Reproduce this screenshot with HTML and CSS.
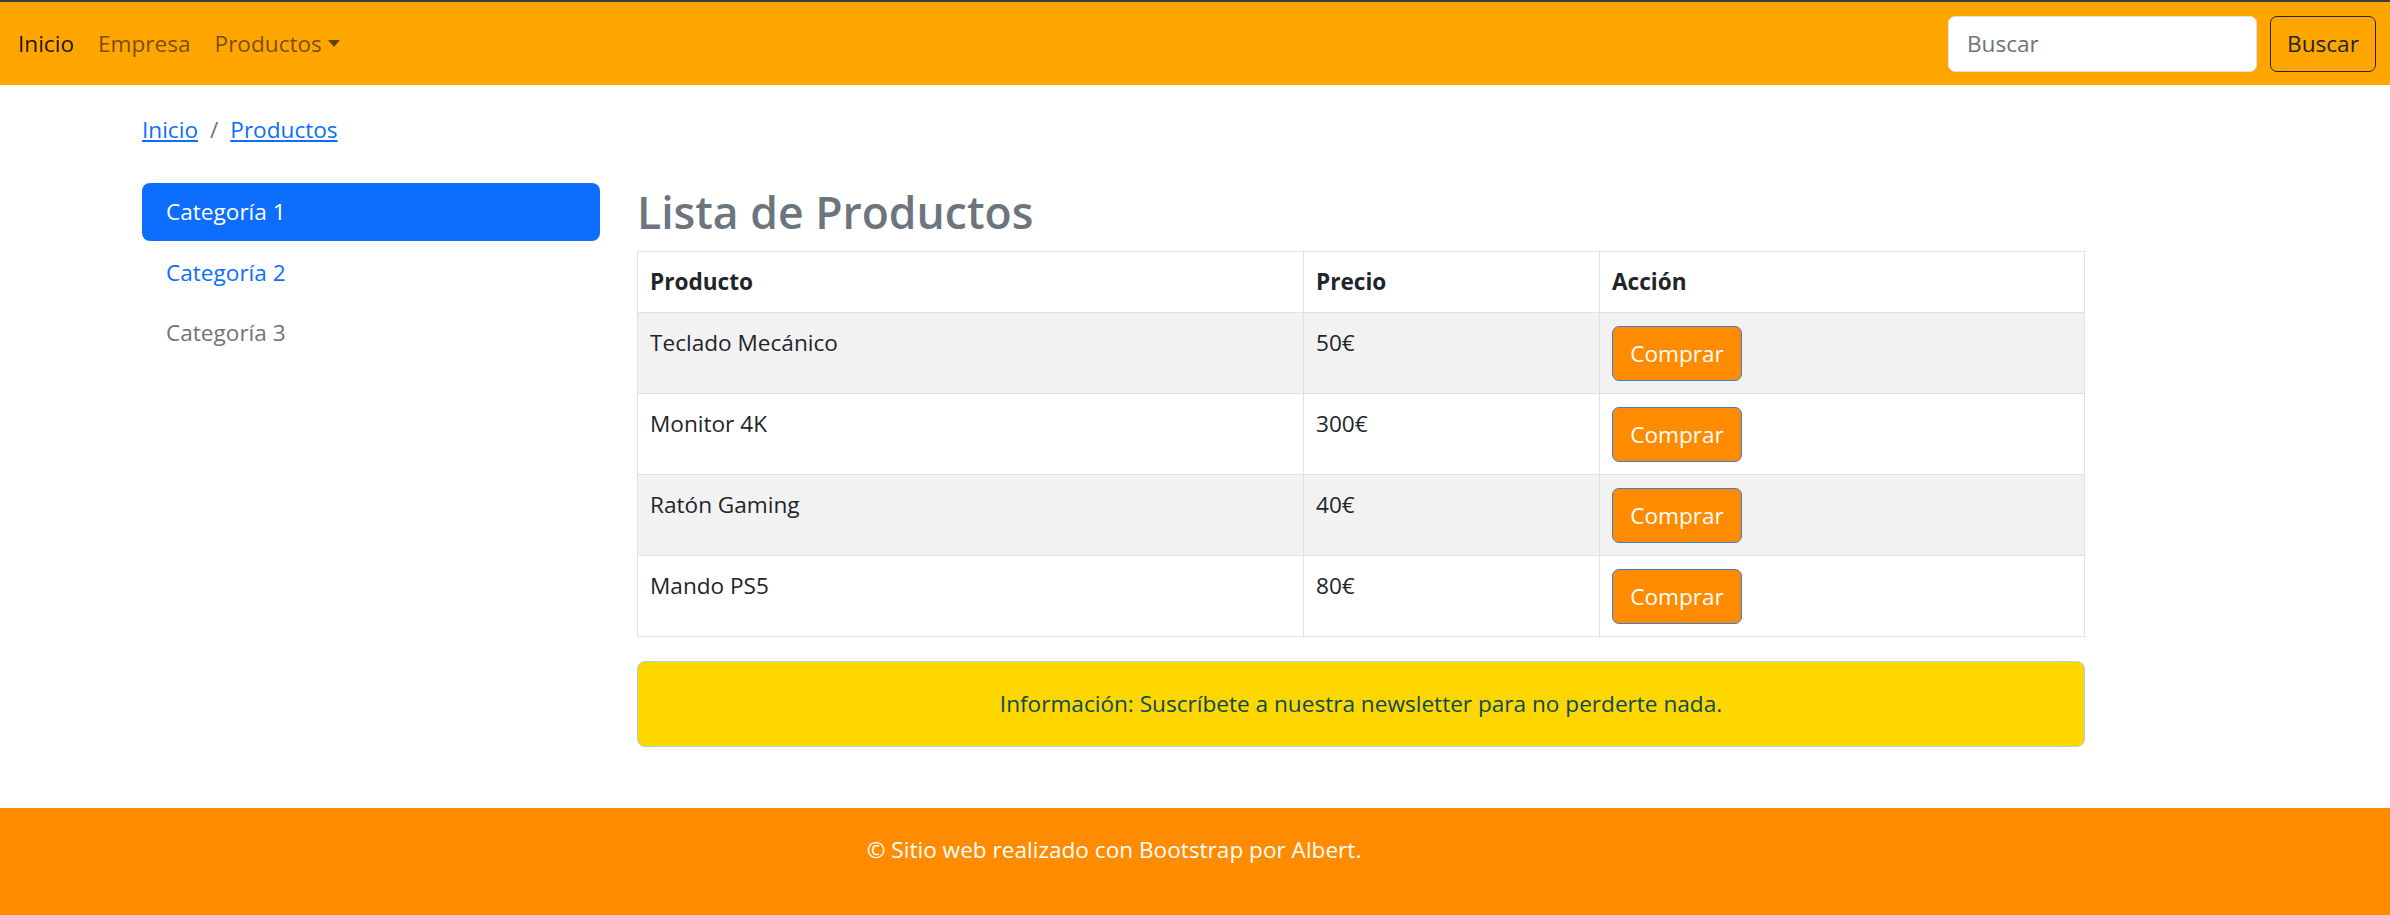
FILE: index.html
```html
<!DOCTYPE html>
<html lang="es">
<head>
<meta charset="utf-8">
<title>Lista de Productos</title>
<link rel="stylesheet" href="styles.css">
</head>
<body>
<nav class="navbar">
  <ul class="nav-links">
    <li><a class="nav-link active" href="#">Inicio</a></li>
    <li><a class="nav-link" href="#">Empresa</a></li>
    <li><a class="nav-link dropdown" href="#">Productos<span class="caret"></span></a></li>
  </ul>
  <form class="search">
    <input class="search-input" type="text" placeholder="Buscar">
    <button class="search-btn" type="button">Buscar</button>
  </form>
</nav>

<main class="container">
  <ol class="breadcrumb">
    <li><a href="#">Inicio</a></li>
    <li class="sep">/</li>
    <li><a href="#">Productos</a></li>
  </ol>
  <div class="row">
    <aside class="sidebar">
      <a class="pill active" href="#">Categoría 1</a>
      <a class="pill" href="#">Categoría 2</a>
      <a class="pill muted" href="#">Categoría 3</a>
    </aside>
    <section class="content">
      <h2 class="title">Lista de Productos</h2>
      <table class="products">
        <thead>
          <tr><th class="c-prod">Producto</th><th class="c-price">Precio</th><th class="c-act">Acción</th></tr>
        </thead>
        <tbody>
          <tr class="odd"><td>Teclado Mecánico</td><td>50€</td><td><button class="buy" type="button">Comprar</button></td></tr>
          <tr><td>Monitor 4K</td><td>300€</td><td><button class="buy" type="button">Comprar</button></td></tr>
          <tr class="odd"><td>Ratón Gaming</td><td>40€</td><td><button class="buy" type="button">Comprar</button></td></tr>
          <tr><td>Mando PS5</td><td>80€</td><td><button class="buy" type="button">Comprar</button></td></tr>
        </tbody>
      </table>
      <div class="alert">Información: Suscríbete a nuestra newsletter para no perderte nada.</div>
    </section>
  </div>
</main>

<footer class="footer">
  <div class="footer-inner">© Sitio web realizado con Bootstrap por Albert.</div>
</footer>
</body>
</html>
```

FILE: styles.css
```css
* { box-sizing: border-box; }
html, body { margin: 0; padding: 0; }
body {
  font-family: "Open Sans", "Noto Sans", sans-serif;
  font-size: 22.6px;
  line-height: 36px;
  color: #212529;
  background: #fff;
}

.navbar {
  display: flex;
  justify-content: space-between;
  align-items: center;
  height: 85px;
  border-top: 2px solid #3d3d3d;
  background: #ffa500;
  padding: 0 14px 0 6px;
}
.nav-links {
  display: flex;
  list-style: none;
  margin: 0;
  padding: 0;
}
.nav-link {
  display: flex;
  align-items: center;
  padding: 0 12px;
  color: rgba(0, 0, 0, 0.55);
  text-decoration: none;
}
.nav-link.active { color: rgba(0, 0, 0, 0.9); }
.caret {
  display: inline-block;
  margin-left: 6px;
  width: 0;
  height: 0;
  border-top: 7px solid rgba(0, 0, 0, 0.6);
  border-left: 6px solid transparent;
  border-right: 6px solid transparent;
}
.search {
  display: flex;
  gap: 13px;
  margin: 0;
}
.search-input {
  width: 309px;
  height: 56px;
  padding: 0 18px;
  border: 1px solid #dee2e6;
  border-radius: 7px;
  font: inherit;
  color: #212529;
  background: #fff;
}
.search-input::placeholder { color: #6c757d; }
.search-btn {
  width: 106px;
  height: 56px;
  border: 1px solid #212529;
  border-radius: 7px;
  background: transparent;
  font: inherit;
  color: #212529;
  padding: 0;
}

.container {
  width: 1944px;
  margin-left: 142px;
}
.breadcrumb {
  display: flex;
  list-style: none;
  margin: 27px 0 0;
  padding: 0;
}
.breadcrumb a { color: #0d6efd; text-decoration: underline; }
.breadcrumb .sep { padding: 0 12px; color: #6c757d; }

.row {
  display: flex;
  gap: 37px;
  margin-top: 35px;
}
.sidebar {
  width: 458px;
  flex: none;
  display: flex;
  flex-direction: column;
}
.pill {
  display: block;
  padding: 12px 24px;
  color: #0d6efd;
  text-decoration: none;
  border-radius: 8px;
}
.pill.active { background: #0d6efd; color: #fff; height: 58px; padding-top: 11px; margin-bottom: 2px; }
.pill.muted { color: #6c757d; }

.content {
  width: 1448px;
  flex: none;
}
.title {
  margin: 0 0 10px;
  font-size: 44.5px;
  font-weight: 600;
  line-height: 58px;
  color: #6c757d;
}
.products {
  width: 100%;
  border-collapse: collapse;
  border: 1px solid #dee2e6;
  margin-bottom: 24px;
}
.products th, .products td {
  border: 1px solid #dee2e6;
  padding: 12px;
  text-align: left;
  vertical-align: top;
}
.products th { font-weight: 700; }
.c-prod { width: 666px; }
.c-price { width: 296px; }
.products tr.odd td { background: #f2f2f2; }
.buy {
  display: block;
  width: 130px;
  height: 55px;
  margin-top: 1px;
  border: 1px solid #3b7ddd;
  border-radius: 7px;
  background: #ff8c00;
  color: #fff;
  font: inherit;
  padding: 0;
}

.alert {
  height: 86px;
  padding: 24px;
  text-align: center;
  background: #ffd700;
  border: 1px solid #a6d5da;
  border-radius: 8px;
  color: #0b4a4f;
}

.footer {
  margin-top: 61px;
  background: #ff8c00;
  padding: 24px 0 47px;
}
.footer-inner {
  width: 1944px;
  margin-left: 142px;
  text-align: center;
  color: #fff;
}
```
